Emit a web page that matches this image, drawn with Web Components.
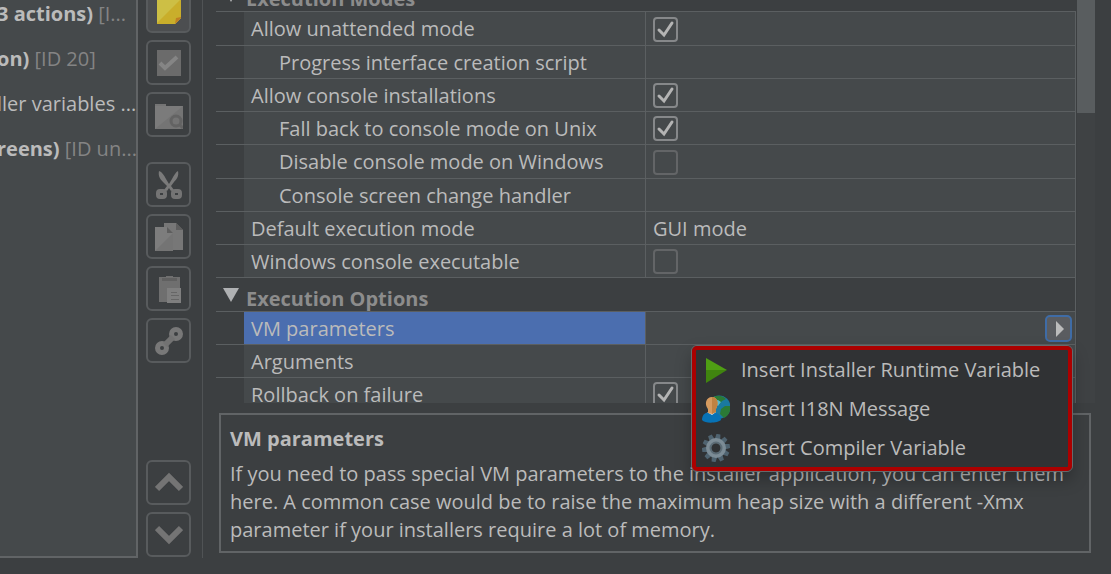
<!DOCTYPE html>
<html lang="en">
<head>
<meta charset="utf-8">
<title>Installer properties</title>
<style>
  :root {
    --bg: #3c3f41;
    --panel: #45494b;
    --line: #5b5f61;
    --border: #616466;
    --fg: #bbbbbb;
    --muted: #848484;
    --select: #4b6eaf;
  }

  body {
    margin: 0;
    background: var(--bg);
    color: var(--fg);
    font: 20px/28px "Open Sans", "Noto Sans", sans-serif;
  }
</style>
</head>
<body>
<ide-window>
  <installer-tree slot="tree"></installer-tree>
  <tool-bar slot="tools"></tool-bar>
  <property-table slot="table"></property-table>
  <help-box slot="help" heading="VM parameters">If you need to pass special VM parameters to the installer application, you can enter them here. A common case would be to raise the maximum heap size with a different -Xmx parameter if your installers require a lot of memory.</help-box>
  <popup-menu slot="popup">
    <menu-entry icon="play">Insert Installer Runtime Variable</menu-entry>
    <menu-entry icon="i18n">Insert I18N Message</menu-entry>
    <menu-entry icon="gear">Insert Compiler Variable</menu-entry>
  </popup-menu>
</ide-window>

<script>
const gearTeeth = Array.from({ length: 10 }, (_, i) =>
  `<path d="M12 0h4l1 7h-6z" transform="rotate(${i * 36 + 10} 14 14)"/>`).join("");

// All icons share a 28x28 box
const ICONS = {
  note: `<path fill="#cdbf45" d="M2 2h24v19l-6 6H2z"/><path fill="#c9ae2b" d="M26 2v19l-6 6H2v-1z"/><path fill="#c07f22" d="M26 20v1l-6 6 1-6z"/>`,
  check: `<path fill="#6b6b6b" d="M2 1h24v26H2z"/><path fill="none" stroke="#858585" stroke-width="4" d="m5 14 5 5L22 8"/>`,
  folder: `<path fill="#747474" d="M0 3h11v2h17v23H0z"/><path fill="#7b7b7b" d="M0 5h28L0 28z"/><circle cx="21" cy="20" r="5" fill="none" stroke="#636363" stroke-width="3"/><path stroke="#636363" stroke-width="3" d="m25 24 3 3"/>`,
  cut: `<path fill="#7a7a7a" d="M4 0c3 1 5 4 7 8l3 5 3-5c2-4 4-7 6-8 1 5-1 8-4 11l-3 4 3 4-3 1-2-3-2 3-3-1 3-4-4-4C5 8 3 5 4 0z"/><g fill="none" stroke="#747474" stroke-width="4"><rect x="3" y="20" width="7" height="6" rx="2"/><rect x="18" y="20" width="7" height="6" rx="2"/></g>`,
  copy: `<path fill="#777" d="M9 0h12l7 7v20H9z"/><path fill="#5e5e5e" d="M21 0v7h7z"/><path fill="#7d7d7d" d="M0 4h12l6 6v18H0z"/><path fill="#747474" d="M18 10v18H0z"/><path fill="#5e5e5e" d="M12 4v6h6z"/>`,
  paste: `<path fill="#6f6f6f" d="M4 2h7V1h7v1h7v25H4z"/><path fill="#606060" d="M7 3h15v3H7z"/><path fill="#7f7f7f" d="M12 13h14v15H12z"/><path stroke="#666" d="M16 17.500h6M16 20.500h8M16 24.500h8"/>`,
  link: `<g fill="none" stroke="#787878" stroke-width="5"><circle cx="7" cy="21" r="4.500"/><circle cx="21" cy="7" r="4.500"/></g><path stroke="#727272" stroke-width="6" d="m10 18 8-8"/>`,
  up: `<path fill="none" stroke="#747474" stroke-width="6" d="m2 20 12-12 12 12"/>`,
  down: `<path fill="none" stroke="#747474" stroke-width="6" d="m2 7 12 12L26 7"/>`,
  play: `<path fill="#4f9e14" d="M4 2v12h21z"/><path fill="#40840f" d="M4 27V14h21z"/>`,
  i18n: `<circle cx="17" cy="12" r="11.500" fill="#1a79a0"/><path fill="#2b7a36" d="M10 3c4-3 10-3 14 1l-4 2-3 4-4-3zM28 11c1 6-2 10-6 12l-4-4 1-5 4-3z"/><path fill="#57b8cf" d="m11 6 5-1 3 2-3 4z"/><path fill="#0772b5" d="M0 25c0-6 4-8 9-8s10 2 10 8c-3 3-16 4-19 0z"/><path fill="#e6e6e6" d="M5 17h9l-4 3z"/><path fill="#d59a5f" d="M6 18v-4C2 9 4 2 10 2s7 7 4 12v3l-4 2z"/><path fill="#c08242" d="M10 2c6 0 7 7 4 12v3l-4 2z"/>`,
  gear: `<g fill="#4f6370">${gearTeeth}</g><circle cx="14" cy="14" r="7.500" fill="none" stroke="#7c8c96" stroke-width="5"/><circle cx="14" cy="14" r="5.500" fill="none" stroke="#5c6c76" stroke-width="2"/>`,
};

const icon = (name) => `<svg viewBox="0 0 28 28" width="28" height="28" aria-hidden="true">${ICONS[name]}</svg>`;

class BaseElement extends HTMLElement {
  constructor() {
    super();
    this.attachShadow({ mode: "open" });
  }

  connectedCallback() {
    this.shadowRoot.innerHTML = `<style>* { box-sizing: border-box; }${this.constructor.styles}</style>${this.render()}`;
  }
}

class IdeWindow extends BaseElement {
  static get styles() {
    return /* css */`
      :host {
        display: flex;
        height: 100vh;
        padding-bottom: 16px;
        box-sizing: border-box;
        overflow: hidden;
        position: relative;
      }

      .tree {
        flex: 0 0 138px;
        border: 2px solid var(--border);
        border-width: 0 2px 2px 0;
        background: var(--panel);
        overflow: hidden;
      }

      .tools {
        display: flex;
        padding: 0 11px 0 8px;
        border-right: 1px solid #505355;
      }

      main {
        flex: 1;
        min-width: 0;
        display: flex;
        flex-direction: column;
        gap: 10px;
        padding: 0 16px 5px 13px;
      }

      .table {
        flex: 1;
        min-height: 0;
        display: flex;
      }

      /* floats over the table and the help box */
      .popup {
        position: absolute;
        top: 345px;
        right: 38px;
      }
    `;
  }

  render() {
    return /* html */`
    <nav class="tree"><slot name="tree"></slot></nav>
    <div class="tools"><slot name="tools"></slot></div>
    <main>
      <div class="table"><slot name="table"></slot></div>
      <slot name="help"></slot>
    </main>
    <div class="popup"><slot name="popup"></slot></div>`;
  }
}

class InstallerTree extends BaseElement {
  static get styles() {
    return /* css */`
      :host {
        display: block;
      }

      ul {
        list-style: none;
        margin: -9px 0 0 -3px;
        padding: 0;
      }

      li {
        line-height: 45px;
        white-space: pre;
      }

      span {
        color: var(--muted);
      }
    `;
  }

  render() {
    return /* html */`
    <ul>
      <li><b>3 actions)</b> <span>[I...</span></li>
      <li><b>on)</b> <span>[ID 20]</span></li>
      <li>ller variables ...</li>
      <li><b>reens)</b> <span>[ID un...</span></li>
    </ul>`;
  }
}

class ToolBar extends BaseElement {
  static get styles() {
    return /* css */`
      :host {
        display: flex;
        flex-direction: column;
        gap: 25px;
        margin-top: -12px;
        padding-bottom: 1px;
      }

      .group {
        display: grid;
        gap: 7px;
      }

      .group:last-child {
        margin-top: auto;
      }

      button {
        display: grid;
        place-items: center;
        width: 45px;
        height: 45px;
        padding: 0;
        border: 2px solid #585b5d;
        border-radius: 6px;
        background: none;
      }

      .active {
        background: #4c4e50;
      }
    `;
  }

  button([name, label]) {
    return `<button type="button" aria-label="${label}"${name === "note" ? ' class="active"' : ""}>${icon(name)}</button>`;
  }

  render() {
    const groups = [
      [["note", "Comment"], ["check", "Toggle"], ["folder", "Group"]],
      [["cut", "Cut"], ["copy", "Copy"], ["paste", "Paste"], ["link", "Link"]],
      [["up", "Move up"], ["down", "Move down"]],
    ];
    return groups.map((g) => `<div class="group">${g.map(this.button).join("")}</div>`).join("");
  }
}

class CheckBox extends BaseElement {
  static get styles() {
    return /* css */`
      :host {
        display: grid;
        justify-content: start;
      }

      input, svg {
        grid-area: 1 / 1;
        width: 25px;
        height: 25px;
        margin: 0;
      }

      input {
        appearance: none;
        border: 2px solid #636567;
        border-radius: 4px;
      }

      input:checked {
        border-color: #86888a;
      }

      svg {
        visibility: hidden;
        pointer-events: none;
      }

      input:checked + svg {
        visibility: visible;
      }
    `;
  }

  render() {
    return /* html */`
    <input type="checkbox" aria-label="${this.getAttribute("label")}"${this.hasAttribute("checked") ? " checked" : ""}>
    <svg viewBox="0 0 25 25"><path d="m6 13 5 5 8-12" fill="none" stroke="#b4b4b4" stroke-width="3" stroke-linecap="round"/></svg>`;
  }
}

class PropertyTable extends BaseElement {
  static get styles() {
    return /* css */`
      :host {
        flex: 1;
        min-width: 0;
        display: flex;
        overflow: hidden;
      }

      .view {
        flex: 1;
      }

      table {
        width: 100%;
        margin-top: -21px;
        table-layout: fixed;
        border-spacing: 0;
      }

      .gutter {
        width: 28px;
      }

      .name {
        width: 402px;
      }

      th, td {
        height: 33px;
        padding: 1px 0 0;
        border-bottom: 1px solid var(--line);
        text-align: left;
        font-weight: normal;
        white-space: nowrap;
      }

      /* 133px for every four rows */
      tr:nth-child(4n + 2) > * {
        height: 34px;
      }

      th:not(.group) {
        padding-left: 7px;
        border-right: 1px solid var(--line);
        background: var(--panel);
      }

      th.sub {
        padding-left: 35px;
      }

      tr.selected th {
        background: var(--select);
      }

      .value {
        padding-left: 7px;
        border-right: 1px solid var(--line);
        background: var(--panel);
      }

      .edit {
        display: flex;
        justify-content: flex-end;
        padding-right: 3px;
      }

      .edit button {
        display: grid;
        place-items: center;
        width: 27px;
        height: 27px;
        padding: 0;
        border: 2px solid #3f6ca6;
        border-radius: 5px;
        background: #5a5c60;
      }

      .group {
        color: #8c8c8c;
        font-weight: bold;
        line-height: 24px;
        vertical-align: bottom;
      }

      tr + tr .group {
        border-right: 1px solid var(--line);
      }

      .group div {
        display: flex;
        align-items: end;
        gap: 7px;
        padding-left: 7px;
      }

      .group svg {
        margin-bottom: 8px;
      }

      .track {
        width: 18px;
        margin-left: 1px;
        background: #3f4244;
      }

      .thumb {
        height: 113px;
        background: #595d5f;
      }
    `;
  }

  row({ group, name, sub, check, text, edit }) {
    if (group) {
      return `<tr><th colspan="3" class="group" scope="colgroup"><div>
        <svg width="16" height="16" viewBox="0 0 16 16"><path d="M0 1h16L8 15z" fill="#afb1b3"/></svg>${group}</div></th></tr>`;
    }
    let value = text || "";
    if (check !== undefined) value = `<check-box label="${name}"${check ? " checked" : ""}></check-box>`;
    if (edit) {
      value = `<div class="edit"><button type="button" aria-label="Insert variable">
        <svg width="14" height="16" viewBox="0 0 14 16"><path d="M4 0l8 8-8 8z" fill="#bbb"/></svg></button></div>`;
    }
    return `<tr${edit ? ' class="selected"' : ""}><td></td><th scope="row"${sub ? ' class="sub"' : ""}>${name}</th><td class="value">${value}</td></tr>`;
  }

  render() {
    const rows = [
      { group: "Execution Modes" },
      { name: "Allow unattended mode", check: true },
      { name: "Progress interface creation script", sub: true },
      { name: "Allow console installations", check: true },
      { name: "Fall back to console mode on Unix", sub: true, check: true },
      { name: "Disable console mode on Windows", sub: true, check: false },
      { name: "Console screen change handler", sub: true },
      { name: "Default execution mode", text: "GUI mode" },
      { name: "Windows console executable", check: false },
      { group: "Execution Options" },
      { name: "VM parameters", edit: true },
      { name: "Arguments" },
      { name: "Rollback on failure", check: true },
    ];
    return /* html */`
    <div class="view">
      <table>
        <colgroup><col class="gutter"><col class="name"><col></colgroup>
        <tbody>${rows.map(this.row).join("")}</tbody>
      </table>
    </div>
    <div class="track"><div class="thumb"></div></div>`;
  }
}

class HelpBox extends BaseElement {
  static get styles() {
    return /* css */`
      :host {
        display: block;
        margin: 0 4px 0 3px;
        padding: 10px 9px 7px;
        border: 2px solid var(--border);
      }

      h2 {
        margin: 0 0 7px;
        font-size: 20px;
        line-height: 28px;
      }

      p {
        margin: 0;
      }
    `;
  }

  render() {
    return `<h2>${this.getAttribute("heading")}</h2><p><slot></slot></p>`;
  }
}

class PopupMenu extends BaseElement {
  static get styles() {
    return /* css */`
      :host {
        display: block;
        width: 382px;
        box-sizing: border-box;
        border: 1px solid #66696b;
        border-radius: 6px;
        box-shadow: 0 8px 16px rgb(0 0 0 / 25%);
      }

      div {
        border: 4px solid #ab0000;
        border-radius: 5px;
        background: #303234;
      }
    `;
  }

  render() {
    return `<div role="menu"><slot></slot></div>`;
  }
}

class MenuEntry extends BaseElement {
  static get styles() {
    return /* css */`
      :host {
        display: block;
      }

      button {
        display: flex;
        align-items: center;
        gap: 11px;
        width: 100%;
        height: 39px;
        padding: 0 6px;
        border: 0;
        background: none;
        color: inherit;
        font: inherit;
        white-space: nowrap;
      }
    `;
  }

  render() {
    return `<button type="button" role="menuitem">${icon(this.getAttribute("icon"))}<slot></slot></button>`;
  }
}

customElements.define("check-box", CheckBox);
customElements.define("ide-window", IdeWindow);
customElements.define("installer-tree", InstallerTree);
customElements.define("tool-bar", ToolBar);
customElements.define("property-table", PropertyTable);
customElements.define("help-box", HelpBox);
customElements.define("popup-menu", PopupMenu);
customElements.define("menu-entry", MenuEntry);
</script>
</body>
</html>
